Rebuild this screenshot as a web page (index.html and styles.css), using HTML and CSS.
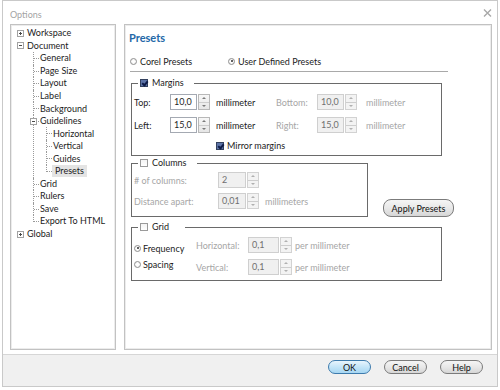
FILE: index.html
```html
<!DOCTYPE html>
<html>
<head>
<meta charset="utf-8">
<title>Options</title>
<link rel="stylesheet" href="styles.css">
</head>
<body>
<div class="window">
  <div class="titlebar">
    <span class="title">Options</span>
    <svg class="close" width="9" height="8" viewBox="0 0 9 8"><path d="M1 0.5 L8 7.5 M8 0.5 L1 7.5" stroke="#a8a8a8" stroke-width="1.4" fill="none"/></svg>
  </div>
  <div class="panes">
    <div class="pane tree-pane">
      <ul class="tree">
        <li><div class="node"><span class="exp exp--plus"></span><span class="lbl">Workspace</span></div></li>
        <li><div class="node"><span class="exp"></span><span class="lbl">Document</span></div>
          <ul class="sub">
            <li><div class="node leaf"><span class="lbl">General</span></div></li>
            <li><div class="node leaf"><span class="lbl">Page Size</span></div></li>
            <li><div class="node leaf"><span class="lbl">Layout</span></div></li>
            <li><div class="node leaf"><span class="lbl">Label</span></div></li>
            <li><div class="node leaf"><span class="lbl">Background</span></div></li>
            <li><div class="node"><span class="exp"></span><span class="lbl">Guidelines</span></div>
              <ul class="sub">
                <li><div class="node leaf"><span class="lbl">Horizontal</span></div></li>
                <li><div class="node leaf"><span class="lbl">Vertical</span></div></li>
                <li><div class="node leaf"><span class="lbl">Guides</span></div></li>
                <li><div class="node leaf sel"><span class="lbl">Presets</span></div></li>
              </ul>
            </li>
            <li><div class="node leaf"><span class="lbl">Grid</span></div></li>
            <li><div class="node leaf"><span class="lbl">Rulers</span></div></li>
            <li><div class="node leaf"><span class="lbl">Save</span></div></li>
            <li><div class="node leaf"><span class="lbl">Export To HTML</span></div></li>
          </ul>
        </li>
        <li><div class="node"><span class="exp exp--plus"></span><span class="lbl">Global</span></div></li>
      </ul>
    </div>

    <div class="pane form-pane">
      <div class="heading">Presets</div>
      <div class="preset-choice">
        <div class="opt opt--corel"><span class="radio"></span>Corel Presets</div>
        <div class="opt"><span class="radio radio--on"></span>User Defined Presets</div>
      </div>
      <div class="sep"></div>

      <fieldset class="group group--wide group--margins">
        <legend class="legend"><span class="check check--on"></span>Margins</legend>
        <div class="margins-grid">
          <span class="flabel">Top:</span>
          <div class="spin spin--m"><span class="field">10,0</span><span class="arrows"><span class="up"></span><span class="down"></span></span></div>
          <span class="unit">millimeter</span>
          <span class="flabel dis">Bottom:</span>
          <div class="spin spin--m dis"><span class="field">10,0</span><span class="arrows"><span class="up"></span><span class="down"></span></span></div>
          <span class="unit unit--far dis">millimeter</span>

          <span class="flabel">Left:</span>
          <div class="spin spin--m"><span class="field">15,0</span><span class="arrows"><span class="up"></span><span class="down"></span></span></div>
          <span class="unit">millimeter</span>
          <span class="flabel dis">Right:</span>
          <div class="spin spin--m dis"><span class="field">15,0</span><span class="arrows"><span class="up"></span><span class="down"></span></span></div>
          <span class="unit unit--far dis">millimeter</span>

          <div class="mirror"><span class="check check--on"></span>Mirror margins</div>
        </div>
      </fieldset>

      <div class="mid-row">
        <fieldset class="group group--cols">
          <legend class="legend"><span class="check"></span>Columns</legend>
          <div class="cols-grid">
            <span class="flabel dis">#&nbsp;of columns:</span>
            <div class="spin spin--c dis"><span class="field">2</span><span class="arrows"><span class="up"></span><span class="down"></span></span></div>
            <span></span>
            <span class="flabel dis">Distance apart:</span>
            <div class="spin spin--c dis"><span class="field">0,01</span><span class="arrows"><span class="up"></span><span class="down"></span></span></div>
            <span class="unit dis">millimeters</span>
          </div>
        </fieldset>
        <div class="btn btn--apply">Apply Presets</div>
      </div>

      <fieldset class="group group--wide group--grid">
        <legend class="legend legend--grid"><span class="check"></span>Grid</legend>
        <div class="grid-body">
          <div class="grid-modes">
            <div class="mode"><span class="radio radio--on"></span>Frequency</div>
            <div class="mode"><span class="radio"></span>Spacing</div>
          </div>
          <div class="grid-grid">
            <span class="flabel dis">Horizontal:</span>
            <div class="spin spin--g dis"><span class="field">0,1</span><span class="arrows"><span class="up"></span><span class="down"></span></span></div>
            <span class="unit unit--tight dis">per millimeter</span>
            <span class="flabel dis">Vertical:</span>
            <div class="spin spin--g dis"><span class="field">0,1</span><span class="arrows"><span class="up"></span><span class="down"></span></span></div>
            <span class="unit unit--tight dis">per millimeter</span>
          </div>
        </div>
      </fieldset>
    </div>
  </div>
  <div class="footer">
    <div class="btn btn--foot btn--ok">OK</div>
    <div class="btn btn--foot">Cancel</div>
    <div class="btn btn--foot">Help</div>
  </div>
</div>
</body>
</html>
```

FILE: styles.css
```css
* { box-sizing: border-box; }

body {
  margin: 0;
  background: #ffffff;
  font-family: Lato, "Open Sans", sans-serif;
  font-size: 9px;
  color: #1c1c1c;
}

.window {
  margin-left: 2px;
  width: 496px;
  height: 387px;
  border: 1px solid #c9c9c9;
  display: flex;
  flex-direction: column;
  background: #ffffff;
}

.titlebar {
  height: 21px;
  flex: none;
  display: flex;
  justify-content: space-between;
  align-items: flex-start;
  padding: 8px 5px 0 7px;
}

.title {
  color: #a3a3a3;
  line-height: 11px;
  font-size: 9px;
}

.close { margin-top: 0; }

.panes {
  height: 332px;
  flex: none;
  display: flex;
  gap: 8px;
  padding: 2px 5px 0 7px;
}

.pane {
  height: 326px;
  border: 1px solid #c2c2c2;
  box-shadow: inset 0 0 0 1px #ececec;
  background: #ffffff;
}

/* ---------- tree ---------- */
.tree-pane { width: 106px; }

.tree, .tree ul {
  list-style: none;
  margin: 0;
  padding: 0;
}

.tree { padding: 2px 0 0 6px; }

.tree li { position: relative; }

.node {
  display: flex;
  align-items: center;
  height: 12.55px;
  white-space: nowrap;
}

.node.leaf { padding-left: 10px; }

.exp {
  position: relative;
  z-index: 1;
  flex: none;
  width: 7px;
  height: 7px;
  margin-right: 3px;
  border: 1px solid #a2a2a2;
  background: #ffffff;
}

.exp::before {
  content: "";
  position: absolute;
  left: 1px;
  top: 2px;
  width: 3px;
  height: 1px;
  background: #4a4a4a;
}

.exp--plus::after {
  content: "";
  position: absolute;
  left: 2px;
  top: 1px;
  width: 1px;
  height: 3px;
  background: #4a4a4a;
}

.sub { margin-left: 13px !important; }

.sub > li::before {
  content: "";
  position: absolute;
  left: 3px;
  top: 0;
  bottom: 0;
  border-left: 1px dotted #9a9a9a;
}

.sub > li:last-child::before { bottom: auto; height: 7px; }

.sub > li::after {
  content: "";
  position: absolute;
  left: 4px;
  top: 6px;
  width: 5px;
  border-top: 1px dotted #9a9a9a;
}

.lbl { line-height: 12px; }

.sel .lbl {
  background: #e4e4e4;
  padding: 0 3px;
  margin-left: -1px;
}

/* ---------- form pane ---------- */
.form-pane {
  width: 368px;
  padding: 6px 0 0 5px;
}

.heading {
  font-size: 11px;
  font-weight: 700;
  color: #2468a8;
  line-height: 14px;
  margin-left: -1px;
}

.preset-choice {
  display: flex;
  align-items: center;
  height: 12px;
  margin-top: 10px;
}

.opt {
  display: flex;
  align-items: center;
  white-space: nowrap;
}

.opt--corel { width: 98px; }

.radio {
  flex: none;
  width: 7px;
  height: 7px;
  border: 1px solid #8f8f8f;
  border-radius: 50%;
  background: radial-gradient(circle, #ffffff 30%, #e8e8e8 100%);
  margin-right: 3px;
  position: relative;
}

.radio--on::after {
  content: "";
  position: absolute;
  left: 1.5px;
  top: 1.5px;
  width: 2px;
  height: 2px;
  border-radius: 50%;
  background: #2b2b2b;
}

.sep {
  width: 318px;
  height: 1px;
  background: #a9a9a9;
  margin-top: 4px;
}

.group {
  margin: 0 0 0 1px;
  padding: 0 3px 0 2px;
  border: 1px solid #6a6a6a;
  min-inline-size: 0;
}

.group--wide { width: 311px; }

.group--margins { margin-top: 6px; padding-top: 6px; padding-bottom: 3px; }

.legend {
  display: flex;
  align-items: center;
  height: 10px;
  line-height: 10px;
  margin-left: 4px;
  padding: 0 10px 0 2px;
}

.legend--grid { padding-right: 16px; }

.check {
  flex: none;
  width: 8px;
  height: 8px;
  margin-right: 4px;
  border: 1px solid #9a9a9a;
  background: linear-gradient(#f4f4f4, #ffffff);
  position: relative;
}

.check--on {
  border-color: #33415e;
  background: #5d74a8;
}

.check--on::after {
  content: "";
  position: absolute;
  left: 1px;
  top: 0px;
  width: 2px;
  height: 4px;
  border: solid #0e1b48;
  border-width: 0 2px 2px 0;
  transform: rotate(40deg);
  transform-origin: center;
  margin-left: 0.5px;
}

.flabel {
  white-space: nowrap;
  align-self: center;
}

.dis { color: #a6a6a6; }

.unit {
  white-space: nowrap;
  align-self: center;
  padding-left: 6px;
}

.unit--far { padding-left: 9px; }
.unit--tight { padding-left: 2px; }

.margins-grid {
  display: grid;
  grid-template-columns: 36px 40px 66px 41px 40px auto;
  grid-template-rows: 16px 16px 12px;
  row-gap: 7px;
}

.mirror {
  grid-column: 3 / -1;
  display: flex;
  align-items: center;
  padding-left: 6px;
  margin-top: -1px;
  white-space: nowrap;
}

.mirror .check { margin-right: 3px; }

/* spin boxes */
.spin {
  display: flex;
  height: 16px;
  gap: 1px;
}

.field {
  height: 16px;
  border: 1px solid #a4a9b2;
  background: #ffffff;
  padding-left: 3px;
  line-height: 13px;
  color: #1e1e1e;
}

.spin--m .field { width: 27px; }
.spin--c .field { width: 28px; }
.spin--g .field { width: 31px; }

.spin.dis .field {
  background: #f0f0f0;
  border-color: #cfcfcf;
  color: #6f6f6f;
}

.arrows {
  width: 12px;
  height: 16px;
  display: flex;
  flex-direction: column;
  border: 1px solid #b8b8b8;
  background: linear-gradient(#f7f7f7, #e6e6e6);
}

.spin.dis .arrows { border-color: #d2d2d2; background: #f3f3f3; }

.up, .down {
  flex: 1;
  display: flex;
  align-items: center;
  justify-content: center;
}

.up { border-bottom: 1px solid #cdcdcd; }

.up::before {
  content: "";
  border-left: 2px solid transparent;
  border-right: 2px solid transparent;
  border-bottom: 2px solid #7a7a7a;
}

.down::before {
  content: "";
  border-left: 2px solid transparent;
  border-right: 2px solid transparent;
  border-top: 2px solid #7a7a7a;
}

.spin.dis .up::before { border-bottom-color: #b0b0b0; }
.spin.dis .down::before { border-top-color: #b0b0b0; }

/* columns row */
.mid-row {
  display: flex;
  align-items: flex-end;
  margin-top: 2px;
}

.group--cols {
  width: 237px;
  padding-top: 4px;
  padding-bottom: 7px;
}

.cols-grid {
  display: grid;
  grid-template-columns: 84px 41px auto;
  grid-template-rows: 16px 16px;
  row-gap: 5px;
}

.btn {
  display: flex;
  align-items: center;
  justify-content: center;
  white-space: nowrap;
  border: 1px solid #7b7b7b;
  border-radius: 8px;
  background: linear-gradient(#f5f5f5 0%, #e8e8e8 50%, #d6d6d6 100%);
  color: #111;
}

.btn--apply {
  width: 71px;
  height: 18px;
  margin-left: 15px;
}

/* grid group */
.group--grid {
  margin-top: 5px;
  padding-top: 5px;
  padding-bottom: 5px;
}

.grid-body { display: flex; }

.grid-modes {
  width: 62px;
  margin-top: 3px;
}

.mode {
  display: flex;
  align-items: center;
  height: 16px;
  white-space: nowrap;
}

.mode .radio { margin-right: 2px; }

.grid-grid {
  display: grid;
  grid-template-columns: 52px 45px auto;
  grid-template-rows: 16px 16px;
  row-gap: 6px;
}

/* footer */
.footer {
  height: 32px;
  flex: none;
  border-top: 1px solid #d6d6d6;
  background: #f0f0f0;
  display: flex;
  justify-content: flex-end;
  align-items: flex-start;
  gap: 13px;
  padding: 5px 14px 0 0;
}

.btn--foot {
  width: 43px;
  height: 14px;
  border-radius: 7px;
}

.btn--ok {
  border-color: #3d7bad;
  background: linear-gradient(#e8f5fd 0%, #c4e5f8 50%, #a7d6f2 100%);
}
```
